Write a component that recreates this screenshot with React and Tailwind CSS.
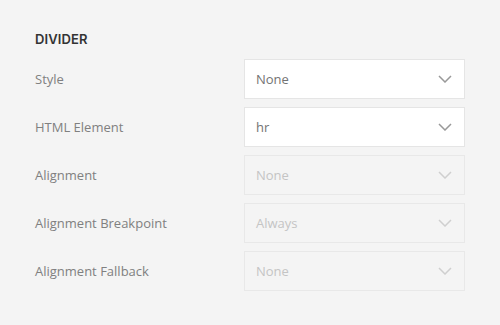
import React from 'react';

const rows = [
  { label: 'Style', value: 'None', disabled: false },
  { label: 'HTML Element', value: 'hr', disabled: false },
  { label: 'Alignment', value: 'None', disabled: true },
  { label: 'Alignment Breakpoint', value: 'Always', disabled: true },
  { label: 'Alignment Fallback', value: 'None', disabled: true },
];

const Chevron = ({ className }) => (
  <svg width="14" height="8" viewBox="0 0 14 8" fill="none" className={className}>
    <path d="M1 1l6 6 6-6" stroke="currentColor" strokeWidth="1.5" />
  </svg>
);

const App = () => {
  return (
    <div
      className="w-[500px] h-[325px] bg-[#f4f4f4] pl-[35px] pt-[31px]"
      style={{ fontFamily: '"Open Sans", sans-serif' }}
    >
      <h3
        className="text-[13px] font-semibold text-[#333] tracking-[0.01em] leading-[16px] mb-[12px]"
        style={{ fontFamily: 'Inter, sans-serif' }}
      >
        DIVIDER
      </h3>
      <div className="flex flex-col gap-2">
        {rows.map((row) => (
          <div key={row.label} className="flex items-center">
            <div className="w-[209px] text-[13px] text-[#808080] pt-[2px]">{row.label}</div>
            <div
              className={`w-[221px] h-[40px] flex items-center justify-between pl-[11px] pr-[12px] border text-[13px] ${
                row.disabled
                  ? 'bg-[#f4f4f4] border-[#e8e8e8] text-[#c4c4c4]'
                  : 'bg-white border-[#e5e5e5] text-[#737373]'
              }`}
            >
              <span className="pt-[2px]">{row.value}</span>
              <Chevron className={row.disabled ? 'text-[#cfcfcf]' : 'text-[#999]'} />
            </div>
          </div>
        ))}
      </div>
    </div>
  );
};

export default App;
